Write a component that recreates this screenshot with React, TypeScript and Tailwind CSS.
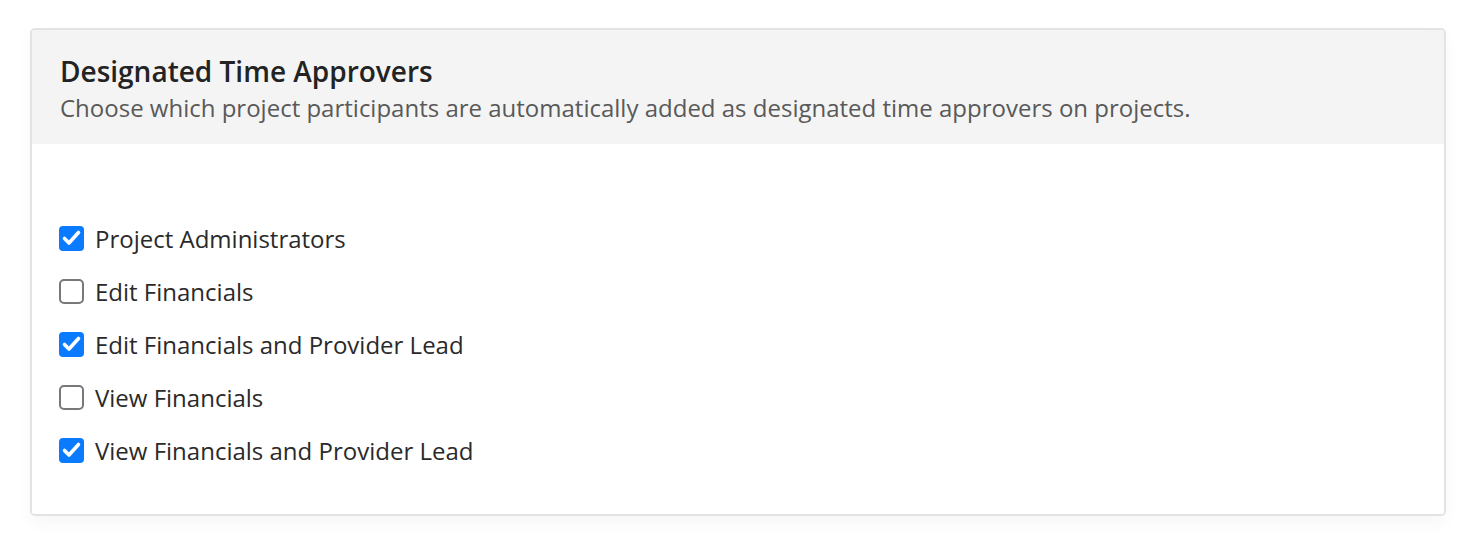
import React from "react";

const items = [
  { label: "Project Administrators", checked: true },
  { label: "Edit Financials", checked: false },
  { label: "Edit Financials and Provider Lead", checked: true },
  { label: "View Financials", checked: false },
  { label: "View Financials and Provider Lead", checked: true },
];

function Box({ checked }: { checked: boolean }) {
  if (checked) {
    return (
      <span className="block h-[25px] w-[25px] shrink-0 rounded-[4px] bg-[#0a7aff]">
        <svg width="25" height="25" viewBox="0 0 25 25">
          <path d="M5.5 12.5 L10 17 L19.5 6.5" fill="none" stroke="white" strokeWidth="3.6" strokeLinecap="round" strokeLinejoin="round" />
        </svg>
      </span>
    );
  }
  return <span className="block h-[25px] w-[25px] shrink-0 rounded-[5px] border-2 border-[#787878] bg-white" />;
}

export default function App() {
  return (
    <div className="min-h-[543px] bg-white pl-[30px] pr-[29px] pt-[28px]" style={{ fontFamily: '"Open Sans", sans-serif' }}>
      <div className="overflow-hidden rounded-[5px] border-2 border-[#e3e3e3] shadow-[0_8px_16px_rgba(0,0,0,0.035)]">
        <div className="h-[114px] bg-[#f4f4f4] px-[28px] pt-[23px]">
          <h2 className="text-[28px] leading-[36px] font-semibold text-[#232323]">Designated Time Approvers</h2>
          <p className="mt-[3px] text-[24px] leading-[32px] text-[#595959]">
            Choose which project participants are automatically added as designated time approvers on projects.
          </p>
        </div>
        <div className="flex flex-col gap-[28px] bg-white px-[27px] pt-[82px] pb-[51px]">
          {items.map((it) => (
            <label key={it.label} className="flex h-[25px] items-center gap-[11px]">
              <Box checked={it.checked} />
              <span className="text-[24px] leading-[30px] text-[#2a2a2a]">{it.label}</span>
            </label>
          ))}
        </div>
      </div>
    </div>
  );
}
